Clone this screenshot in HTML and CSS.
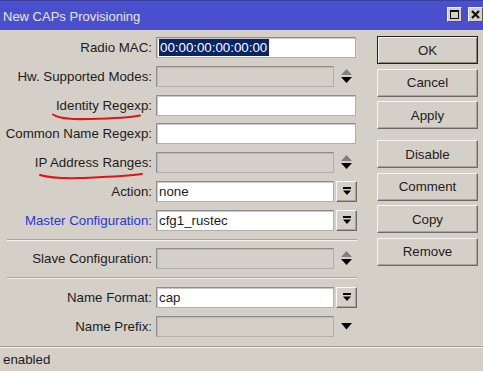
FILE: index.html
```html
<!DOCTYPE html>
<html>
<head>
<meta charset="utf-8">
<link rel="stylesheet" href="styles.css">
</head>
<body>
<div class="window">
  <div class="titlebar">
    <span class="title">New CAPs Provisioning</span>
    <div class="wbtns">
      <span class="wbtn"><span class="maxicon"></span></span>
      <span class="wbtn">
        <svg width="9" height="9" viewBox="0 0 9 9"><path d="M1 1 L8 8 M8 1 L1 8" stroke="#111" stroke-width="2.2"/></svg>
      </span>
    </div>
  </div>
  <div class="main">
    <div class="form">
      <div class="row">
        <label class="lbl">Radio MAC:</label>
        <div class="input full"><span class="sel">00:00:00:00:00:00</span></div>
      </div>
      <div class="row">
        <label class="lbl">Hw. Supported Modes:</label>
        <div class="input short disabled"></div>
        <span class="addon"><svg width="11" height="15" viewBox="0 0 11 15"><path d="M5.5 0 L11 6 L0 6 Z" fill="#808080"/><path d="M0 8 L11 8 L5.5 14 Z" fill="#000"/></svg></span>
      </div>
      <div class="row">
        <label class="lbl">Identity Regexp:</label>
        <div class="input full"></div>
      </div>
      <div class="row">
        <label class="lbl">Common Name Regexp:</label>
        <div class="input full"></div>
      </div>
      <div class="row">
        <label class="lbl">IP Address Ranges:</label>
        <div class="input short disabled"></div>
        <span class="addon"><svg width="11" height="15" viewBox="0 0 11 15"><path d="M5.5 0 L11 6 L0 6 Z" fill="#808080"/><path d="M0 8 L11 8 L5.5 14 Z" fill="#000"/></svg></span>
      </div>
      <div class="row">
        <label class="lbl">Action:</label>
        <div class="input short">none</div>
        <span class="addon btn"><svg width="8" height="9" viewBox="0 0 8 9"><rect x="0" y="0" width="8" height="2" fill="#000"/><path d="M0 3.5 L8 3.5 L4 8 Z" fill="#000"/></svg></span>
      </div>
      <div class="row">
        <label class="lbl blue">Master Configuration:</label>
        <div class="input short">cfg1_rustec</div>
        <span class="addon btn"><svg width="8" height="9" viewBox="0 0 8 9"><rect x="0" y="0" width="8" height="2" fill="#000"/><path d="M0 3.5 L8 3.5 L4 8 Z" fill="#000"/></svg></span>
      </div>
      <div class="sep"></div>
      <div class="row">
        <label class="lbl">Slave Configuration:</label>
        <div class="input short disabled"></div>
        <span class="addon"><svg width="11" height="15" viewBox="0 0 11 15"><path d="M5.5 0 L11 6 L0 6 Z" fill="#808080"/><path d="M0 8 L11 8 L5.5 14 Z" fill="#000"/></svg></span>
      </div>
      <div class="sep"></div>
      <div class="row">
        <label class="lbl">Name Format:</label>
        <div class="input short">cap</div>
        <span class="addon btn"><svg width="8" height="9" viewBox="0 0 8 9"><rect x="0" y="0" width="8" height="2" fill="#000"/><path d="M0 3.5 L8 3.5 L4 8 Z" fill="#000"/></svg></span>
      </div>
      <div class="row">
        <label class="lbl">Name Prefix:</label>
        <div class="input short disabled"></div>
        <span class="addon"><svg width="11" height="7" viewBox="0 0 11 7"><path d="M0 0 L11 0 L5.5 6.5 Z" fill="#000"/></svg></span>
      </div>
    </div>
    <div class="buttons">
      <div class="button default">OK</div>
      <div class="button">Cancel</div>
      <div class="button">Apply</div>
      <div class="button group">Disable</div>
      <div class="button">Comment</div>
      <div class="button">Copy</div>
      <div class="button">Remove</div>
    </div>
  </div>
  <div class="status">enabled</div>
  <svg class="marks" width="483" height="371" viewBox="0 0 483 371">
    <path d="M53 114.5 C60 119, 72 119.5, 90 119 C110 118.5, 128 118, 140 115.5" fill="none" stroke="#e01414" stroke-width="2" stroke-linecap="round"/>
    <path d="M40 175 C50 178, 62 178.5, 80 178 C105 177, 125 176.5, 142 174" fill="none" stroke="#e01414" stroke-width="2" stroke-linecap="round"/>
  </svg>
</div>
</body>
</html>
```

FILE: styles.css
```css
html, body {
  margin: 0;
  padding: 0;
}
body {
  width: 483px;
  height: 371px;
  overflow: hidden;
  font-family: "Liberation Sans", Arial, sans-serif;
  font-size: 13.3px;
  color: #1c1c1c;
  background: #d4d0c8;
}
.window {
  position: relative;
  width: 483px;
  height: 371px;
  display: flex;
  flex-direction: column;
  background: #d4d0c8;
}
.titlebar {
  height: 30px;
  flex: none;
  box-sizing: border-box;
  background: #4a50cd;
  border-top: 1px solid #3a3f9e;
  display: flex;
  align-items: center;
  justify-content: space-between;
  padding-left: 3px;
}
.title {
  color: #e6e6f2;
  font-size: 13px;
  margin-top: 1px;
}
.wbtns {
  display: flex;
  gap: 6px;
  margin-top: -2px;
}
.wbtn {
  width: 15px;
  height: 15px;
  box-sizing: border-box;
  background: #d4d0c8;
  border: 1px solid;
  border-color: #f2f2f2 #555 #555 #f2f2f2;
  display: flex;
  align-items: center;
  justify-content: center;
}
.maxicon {
  width: 9px;
  height: 9px;
  box-sizing: border-box;
  border: 1px solid #111;
  border-top-width: 2px;
}
.main {
  flex: 1;
  display: flex;
  align-items: flex-start;
  padding-top: 7px;
}
.form {
  width: 357px;
  display: flex;
  flex-direction: column;
  gap: 7.8px;
}
.row {
  height: 21px;
  display: flex;
  align-items: center;
}
.lbl {
  width: 152px;
  flex: none;
  text-align: right;
  white-space: nowrap;
  margin-right: 4px;
}
.lbl.blue {
  color: #2a36d8;
}
.input {
  height: 21px;
  box-sizing: border-box;
  background: #fff;
  border: 1px solid #8e8e8e;
  border-right-color: #b0b0b0;
  border-bottom-color: #b0b0b0;
  box-shadow: inset 1px 1px 0 #c8c8c8;
  padding-left: 2px;
  display: flex;
  align-items: center;
  white-space: nowrap;
  flex: none;
}
.input.full {
  width: 200px;
}
.input.short {
  width: 178px;
}
.input.disabled {
  background: #d4d0c8;
  box-shadow: inset 1px 1px 0 #bdb9b1;
}
.sel {
  background: #0a246a;
  color: #fff;
  height: 17px;
  line-height: 17px;
  padding: 0 2px 0 1px;
}
.addon {
  width: 21px;
  height: 21px;
  margin-left: 2px;
  box-sizing: border-box;
  display: flex;
  align-items: center;
  justify-content: center;
  flex: none;
}
.addon.btn {
  border: 1px solid;
  border-color: #f6f6f6 #6a6a6a #6a6a6a #f6f6f6;
  box-shadow: inset -1px -1px 0 #a8a49c;
}
.sep {
  margin-left: 7px;
  height: 2px;
  box-sizing: border-box;
  border-top: 1px solid #a9a59d;
  border-bottom: 1px solid #f4f2ee;
}
.buttons {
  width: 101px;
  margin-left: 20px;
  margin-top: -1px;
  display: flex;
  flex-direction: column;
  gap: 4.5px;
}
.button {
  height: 28px;
  box-sizing: border-box;
  display: flex;
  align-items: center;
  justify-content: center;
  border: 1px solid;
  border-color: #f4f4f4 #6a6a6a #6a6a6a #f4f4f4;
  box-shadow: inset -1px -1px 0 #a8a49c;
}
.button.default {
  border-color: #222;
  box-shadow: inset 1px 1px 0 #f4f4f4, inset -1px -1px 0 #8a867e;
}
.button.group {
  margin-top: 6.5px;
}
.status {
  height: 25px;
  flex: none;
  box-sizing: border-box;
  border-top: 1px solid #a09c94;
  box-shadow: inset 0 1px 0 #f2f0ec;
  padding-left: 3px;
  display: flex;
  align-items: center;
}
.marks {
  position: absolute;
  left: 0;
  top: 0;
  pointer-events: none;
}
```
